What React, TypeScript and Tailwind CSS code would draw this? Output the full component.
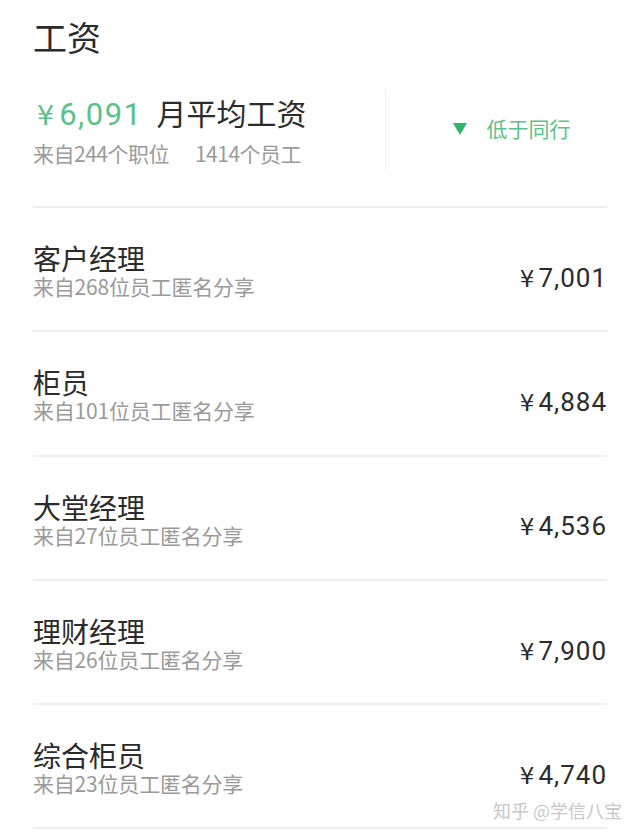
const rows = [
  { title: '客户经理', count: 268, price: '7,001' },
  { title: '柜员', count: 101, price: '4,884' },
  { title: '大堂经理', count: 27, price: '4,536' },
  { title: '理财经理', count: 26, price: '7,900' },
  { title: '综合柜员', count: 23, price: '4,740' },
];

const cjk = "font-['Noto_Sans_CJK_SC',sans-serif]";
const num = "font-['Roboto','Noto_Sans_CJK_SC',sans-serif]";
const yen = "font-['DejaVu_Sans',sans-serif]";

export default function App() {
  return (
    <div className={`w-[640px] h-[834px] bg-white overflow-hidden relative ${cjk}`}>
      <div className="px-[33px]">
        <h1 className="pt-[14px] text-[34px] leading-[46px] text-[#2b2b2b] font-normal">工资</h1>

        <div className="flex items-center mt-[30px] pb-[36px] border-b-2 border-[#eeeeee]">
          <div className="w-[352px] pr-4">
            <div className="flex items-baseline">
              <span className={`${yen} text-[27px] leading-[38px] text-[#5cc08b] ml-[4px] mr-[5px]`}>¥</span>
              <span className={`${num} text-[31px] leading-[38px] text-[#5cc08b] tracking-[1.5px]`}>6,091</span>
              <span className="ml-[14px] text-[30px] leading-[38px] text-[#2b2b2b]">月平均工资</span>
            </div>
            <div className="mt-[4px] text-[21px] leading-[28px] text-[#9a9a9a] tracking-[-0.5px]">
              来自244个职位<span className="ml-[26px]">1414个员工</span>
            </div>
          </div>
          <div className="w-px h-[80px] bg-[#eeeeee]" />
          <div className="flex-1 flex items-center justify-center gap-[20px] pl-[30px] pb-[2px]">
            <svg width="14" height="12" viewBox="0 0 14 12">
              <polygon points="0,0 14,0 7,12" fill="#2fb565" />
            </svg>
            <span className="text-[21px] text-[#5cc08b]">低于同行</span>
          </div>
        </div>

        {rows.map((r) => (
          <div
            key={r.title}
            className="flex items-center justify-between h-[124.3px] border-b-2 border-[#eeeeee]"
          >
            <div className="pt-[4px]">
              <div className="text-[28px] leading-[30px] text-[#2b2b2b]">{r.title}</div>
              <div className="text-[21px] leading-[26px] text-[#9a9a9a] tracking-[-0.2px]">
                来自{r.count}位员工匿名分享
              </div>
            </div>
            <div className="pt-[18px] flex items-baseline text-[#2b2b2b]">
              <span className={`${yen} text-[23px] mr-[4px]`}>¥</span>
              <span className={`${num} text-[26px] tracking-[1px]`}>{r.price}</span>
            </div>
          </div>
        ))}
      </div>

      <div className="absolute right-[18px] bottom-[12px] text-[18px] leading-[24px] text-[#c8c8c8]">
        知乎 @学信八宝
      </div>
    </div>
  );
}
